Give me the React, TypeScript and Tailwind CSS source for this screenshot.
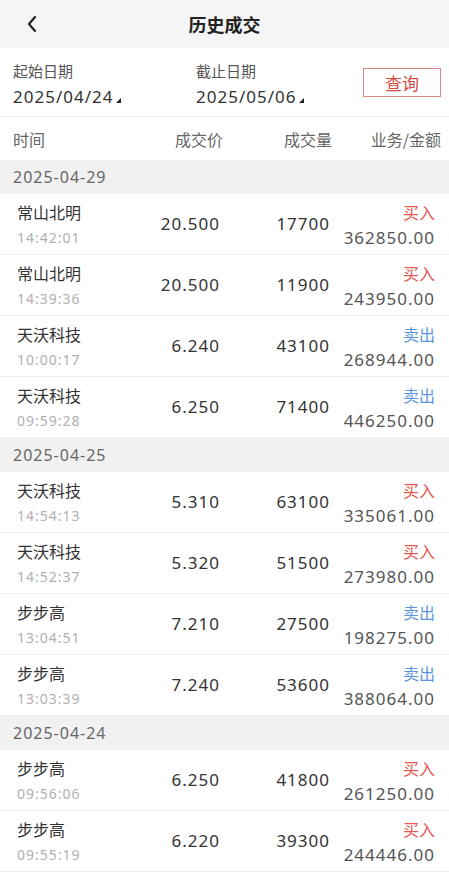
import React from "react";

type Trade = {
  name: string;
  time: string;
  price: string;
  qty: string;
  side: "buy" | "sell";
  amount: string;
};

type Group = { date: string; trades: Trade[] };

const groups: Group[] = [
  {
    date: "2025-04-29",
    trades: [
      { name: "常山北明", time: "14:42:01", price: "20.500", qty: "17700", side: "buy", amount: "362850.00" },
      { name: "常山北明", time: "14:39:36", price: "20.500", qty: "11900", side: "buy", amount: "243950.00" },
      { name: "天沃科技", time: "10:00:17", price: "6.240", qty: "43100", side: "sell", amount: "268944.00" },
      { name: "天沃科技", time: "09:59:28", price: "6.250", qty: "71400", side: "sell", amount: "446250.00" },
    ],
  },
  {
    date: "2025-04-25",
    trades: [
      { name: "天沃科技", time: "14:54:13", price: "5.310", qty: "63100", side: "buy", amount: "335061.00" },
      { name: "天沃科技", time: "14:52:37", price: "5.320", qty: "51500", side: "buy", amount: "273980.00" },
      { name: "步步高", time: "13:04:51", price: "7.210", qty: "27500", side: "sell", amount: "198275.00" },
      { name: "步步高", time: "13:03:39", price: "7.240", qty: "53600", side: "sell", amount: "388064.00" },
    ],
  },
  {
    date: "2025-04-24",
    trades: [
      { name: "步步高", time: "09:56:06", price: "6.250", qty: "41800", side: "buy", amount: "261250.00" },
      { name: "步步高", time: "09:55:19", price: "6.220", qty: "39300", side: "buy", amount: "244446.00" },
    ],
  },
];

const cjk = "font-['Noto_Sans_CJK_SC',sans-serif]";
const num = "font-['Noto_Sans','Noto_Sans_CJK_SC',sans-serif] tracking-[1px]";

function Corner() {
  return (
    <svg width="5" height="5" viewBox="0 0 5 5" className="mb-[5px] ml-[3px] self-end">
      <polygon points="5,0 5,5 0,5" fill="#222" />
    </svg>
  );
}

function TradeRow({ t }: { t: Trade }) {
  return (
    <div className="flex h-[61px] items-center border-b border-[#efefef] bg-white">
      <div className="flex flex-1 flex-col pl-[17px]">
        <span className={`${cjk} text-[16px] leading-[22px] text-[#333]`}>{t.name}</span>
        <span className={`${num} mt-[5px] text-[14px] leading-[20px] text-[#b0b0b0]`}>{t.time}</span>
      </div>
      <div className={`${num} w-[90px] text-right text-[17px] text-[#333]`}>{t.price}</div>
      <div className={`${num} w-[110px] text-right text-[17px] text-[#333]`}>{t.qty}</div>
      <div className="flex w-[105px] flex-col items-end">
        <span
          className={`${cjk} text-[16px] leading-[22px] ${t.side === "buy" ? "text-[#e5574f]" : "text-[#5b96dd]"}`}
        >
          {t.side === "buy" ? "买入" : "卖出"}
        </span>
        <span className={`${num} mt-[5px] text-[17px] leading-[20px] text-[#555]`}>{t.amount}</span>
      </div>
      <div className="w-[14px]" />
    </div>
  );
}

export default function App() {
  return (
    <div className={`${cjk} flex min-h-[873px] w-[449px] flex-col bg-white`}>
      {/* nav bar */}
      <div className="relative flex h-[48px] items-center justify-center bg-[#f5f5f5]">
        <svg
          width="12"
          height="18"
          viewBox="0 0 12 18"
          className="absolute left-[26px] top-[15px]"
          fill="none"
          stroke="#222"
          strokeWidth="2.2"
          strokeLinecap="round"
          strokeLinejoin="round"
        >
          <polyline points="9,2 3,9 9,16" />
        </svg>
        <span className="text-[18px] font-semibold text-[#222]">历史成交</span>
      </div>

      {/* date filter */}
      <div className="flex h-[69px] border-b border-[#ededed] pt-[13px]">
        <div className="flex w-[196px] flex-col pl-[13px]">
          <span className="text-[15px] leading-[20px] text-[#555]">起始日期</span>
          <div className="mt-[5px] flex items-center">
            <span className={`${num} text-[17px] leading-[22px] text-[#333]`}>2025/04/24</span>
            <Corner />
          </div>
        </div>
        <div className="flex flex-1 flex-col">
          <span className="text-[15px] leading-[20px] text-[#555]">截止日期</span>
          <div className="mt-[5px] flex items-center">
            <span className={`${num} text-[17px] leading-[22px] text-[#333]`}>2025/05/06</span>
            <Corner />
          </div>
        </div>
        <div className="pr-[8px] pt-[7px]">
          <button className="flex h-[29px] w-[78px] items-center justify-center border border-[#dc8a86] text-[17px] text-[#d2473f]">
            查询
          </button>
        </div>
      </div>

      {/* column header */}
      <div className="flex h-[43px] items-center text-[16px] text-[#666]">
        <div className="flex-1 pl-[13px]">时间</div>
        <div className="w-[90px] text-right">成交价</div>
        <div className="w-[109px] text-right">成交量</div>
        <div className="w-[109px] text-right">业务/金额</div>
        <div className="w-[8px]" />
      </div>

      {groups.map((g) => (
        <div key={g.date}>
          <div className={`${num} flex h-[34px] items-center bg-[#f1f1f1] pl-[13px] text-[16px] text-[#666]`}>
            {g.date}
          </div>
          {g.trades.map((t, i) => (
            <TradeRow key={i} t={t} />
          ))}
        </div>
      ))}
    </div>
  );
}
